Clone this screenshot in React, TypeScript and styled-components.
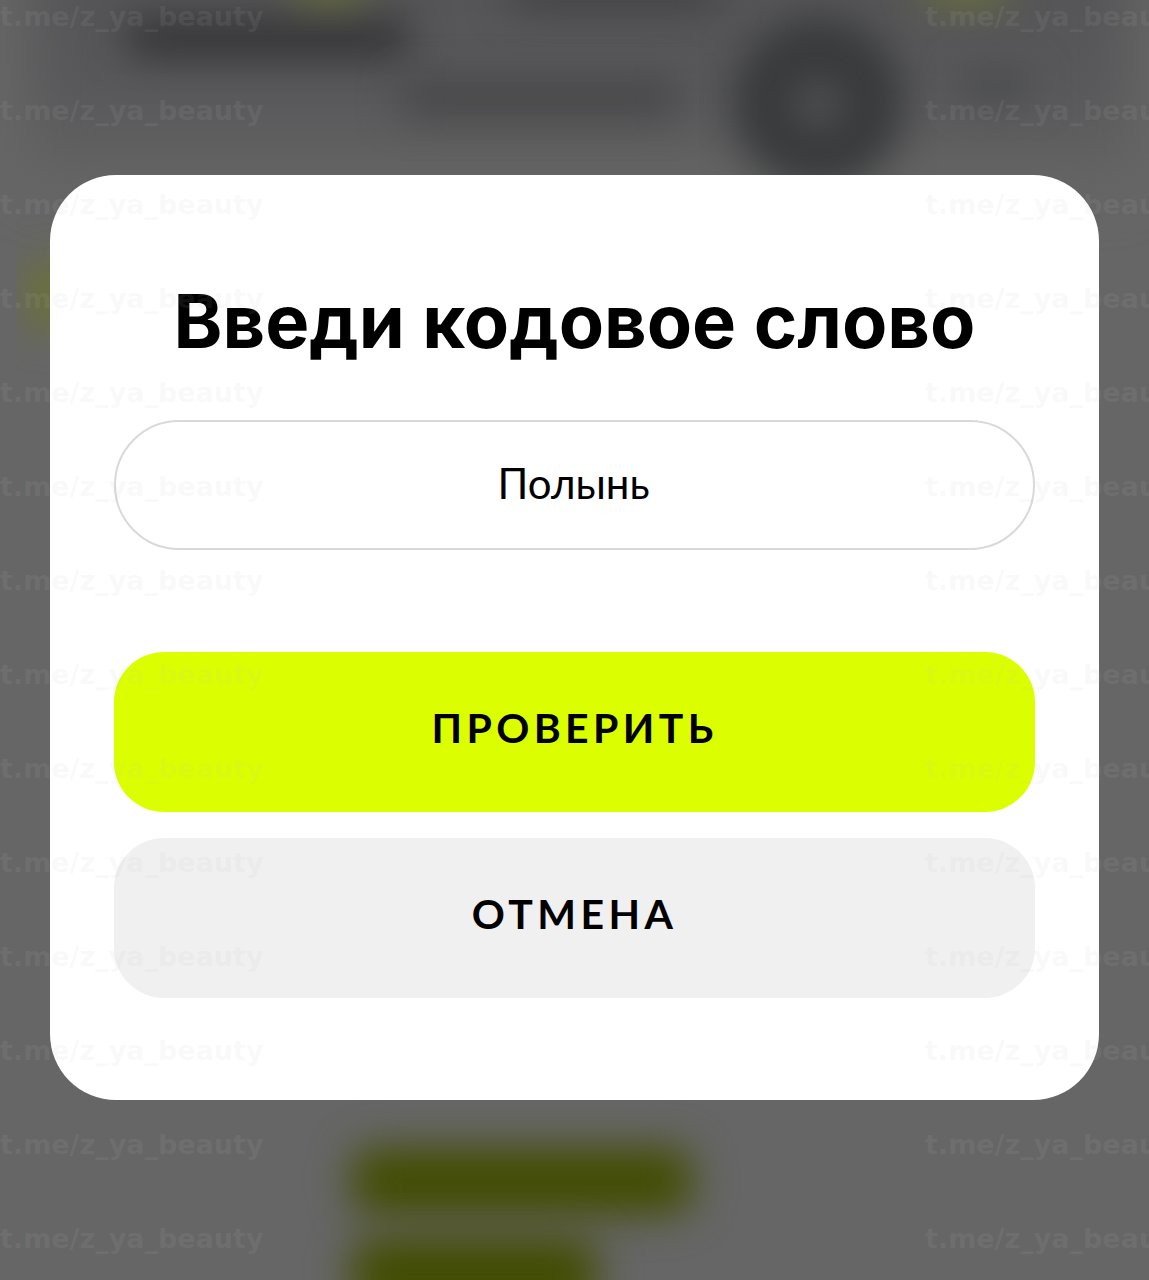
import React from 'react';
import styled, { createGlobalStyle } from 'styled-components';

const GlobalStyle = createGlobalStyle`
  html, body {
    margin: 0;
    padding: 0;
    background: #666666;
  }
`;

const Stage = styled.div`
  position: relative;
  width: 1149px;
  height: 1280px;
  overflow: hidden;
  display: flex;
  justify-content: center;
  align-items: flex-start;
  padding-top: 175px;
  box-sizing: border-box;
  background: #666666;
`;

const Backdrop = styled.svg`
  position: absolute;
  inset: 0;
  width: 100%;
  height: 100%;
`;

const Card = styled.div`
  position: relative;
  width: 1049px;
  height: 925px;
  box-sizing: border-box;
  padding: 107px 64px 0;
  display: flex;
  flex-direction: column;
  align-items: stretch;
  background: #ffffff;
  border-radius: 66px;
`;

const Title = styled.h1`
  margin: 0;
  height: 138px;
  font-family: 'Inter', 'Liberation Sans', Arial, sans-serif;
  font-weight: 700;
  font-size: 74px;
  line-height: 78px;
  text-align: center;
  white-space: nowrap;
  color: #000000;
`;

const Field = styled.div`
  width: 921px;
  height: 130px;
  box-sizing: border-box;
  display: flex;
  align-items: center;
  justify-content: center;
  padding: 0 2px 4px 0;
  border: 2px solid #d9d9d9;
  border-radius: 65px;
  font-family: 'Lato', 'Open Sans', sans-serif;
  font-size: 42px;
  color: #000000;
  margin-bottom: 102px;
`;

const Button = styled.button<{ $variant: 'primary' | 'muted' }>`
  width: 921px;
  height: 160px;
  padding: 0 0 10px;
  border: none;
  border-radius: 50px;
  background: ${({ $variant }) => ($variant === 'primary' ? '#dcff00' : '#f0f0f0')};
  font-family: 'Lato', 'Open Sans', sans-serif;
  font-weight: 700;
  font-size: 41px;
  letter-spacing: 4.4px;
  color: #000000;
  & + & {
    margin-top: 26px;
  }
`;

const WatermarkLayer = styled.div`
  position: absolute;
  inset: 0;
  pointer-events: none;
  display: grid;
  grid-template-columns: 925px 525px;
  grid-auto-rows: 94px;
`;

const WatermarkText = styled.span`
  font-family: 'DejaVu Sans', sans-serif;
  font-weight: 700;
  font-size: 27px;
  line-height: 34px;
  white-space: nowrap;
  color: rgba(191, 191, 191, 0.1);
`;

const rows = Array.from({ length: 14 }, (_, i) => i);

const App: React.FC = () => {
  return (
    <>
      <GlobalStyle />
      <Stage>
        <Backdrop viewBox="0 0 1149 1280">
          <defs>
            <linearGradient id="topShade" x1="0" y1="0" x2="0" y2="1">
              <stop offset="0" stopColor="#545456" />
              <stop offset="0.65" stopColor="#59595b" />
              <stop offset="1" stopColor="#666666" />
            </linearGradient>
            <filter id="soft" x="-60%" y="-150%" width="220%" height="400%" colorInterpolationFilters="sRGB">
              <feGaussianBlur stdDeviation="21" />
            </filter>
            <filter id="softer" x="-50%" y="-100%" width="200%" height="300%" colorInterpolationFilters="sRGB">
              <feGaussianBlur stdDeviation="26" />
            </filter>
          </defs>
          <rect x="30" y="-60" width="1100" height="250" fill="url(#topShade)" filter="url(#softer)" />
          <rect x="125" y="20" width="285" height="36" rx="14" fill="#2f2f31" filter="url(#soft)" />
          <rect x="400" y="82" width="280" height="32" rx="12" fill="#434345" filter="url(#soft)" />
          <rect x="510" y="-24" width="210" height="32" rx="12" fill="#3f3f41" filter="url(#soft)" />
          <rect x="960" y="72" width="70" height="28" rx="10" fill="#474848" filter="url(#soft)" />
          <circle cx="818" cy="103" r="54" fill="none" stroke="#38393a" strokeWidth="64" filter="url(#soft)" />
          <rect x="295" y="-26" width="70" height="24" rx="8" fill="#727a2c" filter="url(#soft)" />
          <rect x="925" y="-26" width="80" height="26" rx="8" fill="#757e30" filter="url(#soft)" />
          <rect x="34" y="262" width="30" height="66" rx="8" fill="#70781c" filter="url(#soft)" />
          <rect x="352" y="1148" width="340" height="66" rx="22" fill="#424c00" filter="url(#soft)" />
          <rect x="352" y="1238" width="245" height="74" rx="22" fill="#424c00" filter="url(#soft)" />
        </Backdrop>
        <Card>
          <Title>Введи кодовое слово</Title>
          <Field>Полынь</Field>
          <Button $variant="primary">ПРОВЕРИТЬ</Button>
          <Button $variant="muted">ОТМЕНА</Button>
        </Card>
        <WatermarkLayer>
          {rows.map((i) => (
            <React.Fragment key={i}>
              <WatermarkText>t.me/z_ya_beauty</WatermarkText>
              <WatermarkText>t.me/z_ya_beauty</WatermarkText>
            </React.Fragment>
          ))}
        </WatermarkLayer>
      </Stage>
    </>
  );
};

export default App;
